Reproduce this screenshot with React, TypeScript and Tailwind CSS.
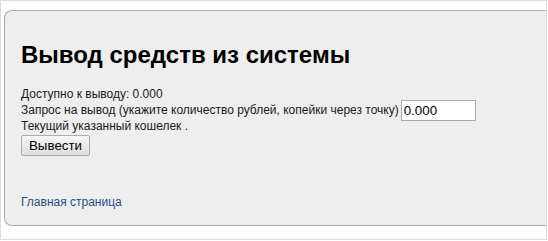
import React from 'react';

const App: React.FC = () => {
    return (
        <div className="w-[548px] h-[241px] bg-white" style={{ fontFamily: '"Liberation Sans", Arial, sans-serif' }}>
            <div className="w-[547px] h-[240px] border border-[#dddddd] overflow-hidden pt-[9px] pl-[3px]">
                <div className="h-[216px] bg-[#eeeeee] border border-r-0 border-[#aaaaaa] rounded-l-[8px] pl-[16px] pt-[30px]">
                    <h1 className="text-[24px] leading-[28px] font-bold text-black">Вывод средств из системы</h1>
                    <div className="mt-[18px] text-[12px] leading-[15px] text-[#1a1a1a]">
                        <div>Доступно к выводу: 0.000</div>
                        <div className="flex items-center h-[17px] gap-[2px]">
                            <span>Запрос на вывод (укажите количество рублей, копейки через точку)</span>
                            <input
                                type="text"
                                defaultValue="0.000"
                                className="shrink-0 w-[75px] h-[21px] px-[2px] border border-[#aaaaaa] bg-white text-[13.33px] text-black outline-none"
                            />
                        </div>
                        <div>Текущий указанный кошелек .</div>
                        <button className="mt-[1px] h-[21px] w-[69px] border border-[#adadad] rounded-[2px] bg-gradient-to-b from-[#f6f6f6] to-[#dedede] text-[13.33px] text-black">
                            Вывести
                        </button>
                        <div className="mt-[39px]">
                            <a href="#" className="text-[#1f4f80]">Главная страница</a>
                        </div>
                    </div>
                </div>
            </div>
        </div>
    );
};

export default App;
